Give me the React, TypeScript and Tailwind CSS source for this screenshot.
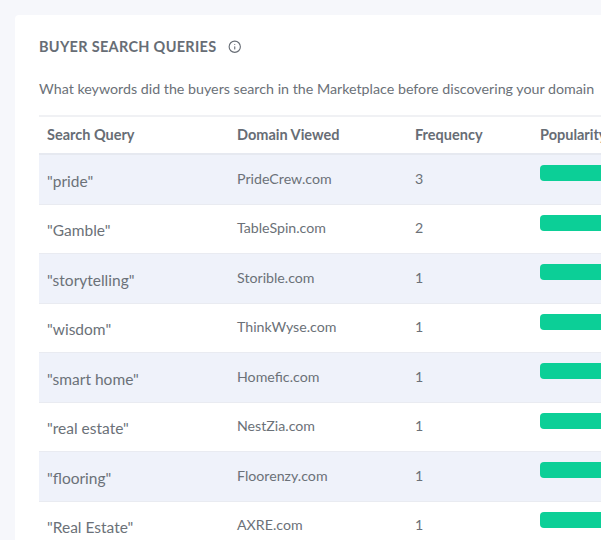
import React from "react";
import { Info } from "lucide-react";

const rows = [
  { query: '"pride"', domain: "PrideCrew.com", frequency: 3 },
  { query: '"Gamble"', domain: "TableSpin.com", frequency: 2 },
  { query: '"storytelling"', domain: "Storible.com", frequency: 1 },
  { query: '"wisdom"', domain: "ThinkWyse.com", frequency: 1 },
  { query: '"smart home"', domain: "Homefic.com", frequency: 1 },
  { query: '"real estate"', domain: "NestZia.com", frequency: 1 },
  { query: '"flooring"', domain: "Floorenzy.com", frequency: 1 },
  { query: '"Real Estate"', domain: "AXRE.com", frequency: 1 },
];

export default function App() {
  return (
    <div className="h-[540px] w-[601px] overflow-hidden bg-[#f6f7fb] pl-[15px] pt-[15px] font-['Lato',sans-serif] text-[#6b7178]">
      <div className="h-[600px] w-[700px] rounded-tl-[4px] bg-white pl-[24px] pt-[23px]">
        <div className="flex h-[17px] items-center">
          <h2 className="text-[14.5px] font-bold leading-[18px] tracking-[0.3px] text-[#676d75]">BUYER SEARCH QUERIES</h2>
          <Info className="ml-[12px] size-[13.5px] text-[#676d75]" strokeWidth={2} />
        </div>
        <p className="mt-[24px] h-[20px] whitespace-nowrap text-[14.25px] leading-[20px]">
          What keywords did the buyers search in the Marketplace before discovering your domain
        </p>
        <div className="mt-[16px] w-[640px] border-t-2 border-[#f0f1f4]">
          <div className="grid h-[38px] grid-cols-[190px_178px_125px_1fr] items-center border-b-2 border-[#e6e9f0] pb-[1px] pl-[8px] text-[14.5px] font-bold text-[#676d75]">
            <span>Search Query</span>
            <span>Domain Viewed</span>
            <span>Frequency</span>
            <span>Popularity</span>
          </div>
          {rows.map((row, i) => (
            <div
              key={row.query}
              className={`grid h-[49.5px] grid-cols-[190px_178px_125px_1fr] border-b border-[#e9ebf1] pl-[8px] ${i % 2 === 0 ? "bg-[#eff2fa]" : "bg-white"}`}
            >
              <span className="pt-[14.5px] text-[15.5px] leading-[22px]">{row.query}</span>
              <span className="pt-[13.5px] text-[14.2px] leading-[20px]">{row.domain}</span>
              <span className="pt-[13.5px] text-[14.2px] leading-[20px]">{row.frequency}</span>
              <div className="pt-[10.4px]">
                <div className="h-[16px] w-[100px] rounded-[4px] bg-[#0ccf97]" />
              </div>
            </div>
          ))}
        </div>
      </div>
    </div>
  );
}
